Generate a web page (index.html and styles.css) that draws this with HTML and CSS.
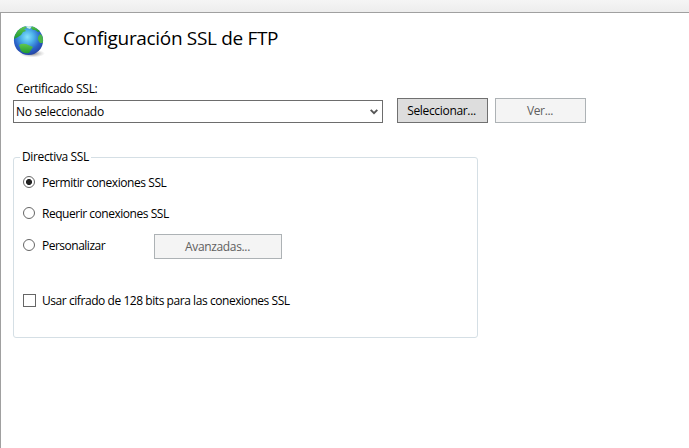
FILE: index.html
```html
<!DOCTYPE html>
<html lang="es">
<head>
<meta charset="utf-8">
<title>Configuración SSL de FTP</title>
<link rel="stylesheet" href="styles.css">
</head>
<body>
<div class="toolbar"></div>
<main class="page">
  <header class="header">
    <svg class="globe" width="34" height="34" viewBox="0 0 34 34">
      <defs>
        <radialGradient id="sea" cx=".46" cy=".38" r=".62">
          <stop offset="0" stop-color="#86e2fa"/><stop offset=".35" stop-color="#4db2ea"/><stop offset=".72" stop-color="#2a63c8"/><stop offset="1" stop-color="#2444a4"/>
        </radialGradient>
        <linearGradient id="land" x1="0" y1="0" x2="0" y2="1"><stop offset="0" stop-color="#62c850"/><stop offset="1" stop-color="#1f9a30"/></linearGradient>
        <radialGradient id="shade"><stop offset="0" stop-color="#666" stop-opacity=".9"/><stop offset="1" stop-color="#aaa" stop-opacity="0"/></radialGradient>
        <clipPath id="ball"><circle cx="15.5" cy="15.5" r="14.5"/></clipPath>
      </defs>
      <ellipse cx="19" cy="28.5" rx="13" ry="4" fill="url(#shade)"/>
      <circle cx="15.5" cy="15.5" r="14.6" fill="url(#sea)"/>
      <g clip-path="url(#ball)">
        <path d="M1 11 6 3 12 1 14 3 11 4 13 6 10 7 8 10 5 12 3 13 1 14Z" fill="url(#land)"/>
        <path d="M19 1 24 2 28 6 25 7 22 5 20 5 18 3Z" fill="url(#land)"/>
        <path d="M13 1 19 1 17 4 14 3Z" fill="#c9efe9"/>
        <path d="M27 9 31 12 30 18 27 18 25 15 25 12Z" fill="#4bb648"/>
        <path d="M6 20Q9 18 13 19L20 22 18 25 16 28Q11 29 8 26Z" fill="url(#land)"/>
      </g>
    </svg>
    <h1><span class="t-title">Configuración SSL de FTP</span></h1>
  </header>
  <div class="label"><span class="t-cert">Certificado SSL:</span></div>
  <div class="cert-row">
    <div class="combo"><span class="t-none">No seleccionado</span>
      <svg width="8" height="7" viewBox="0 0 8 7"><path d="M.7 1.8 4 5.1 7.3 1.8" fill="none" stroke="#555" stroke-width="1.9"/></svg>
    </div>
    <button class="btn select"><span class="t-sel">Seleccionar...</span></button>
    <button class="btn view" disabled><span class="t-view">Ver...</span></button>
  </div>
  <section class="group">
    <div class="legend"><span class="t-legend">Directiva SSL</span></div>
    <div class="option"><i class="radio checked"></i><span class="t-allow">Permitir conexiones SSL</span></div>
    <div class="option"><i class="radio"></i><span class="t-require">Requerir conexiones SSL</span></div>
    <div class="option custom"><i class="radio"></i><span class="t-custom">Personalizar</span><button class="btn advanced" disabled><span class="t-adv">Avanzadas...</span></button></div>
    <div class="option cipher"><i class="check"></i><span class="t-cipher">Usar cifrado de 128 bits para las conexiones SSL</span></div>
  </section>
</main>
</body>
</html>
```
FILE: styles.css
```css
* { box-sizing: border-box; }
body { margin: 0; height: 448px; overflow: hidden; background: #fff; color: #000; font: 12px/16px "Open Sans", "Noto Sans", sans-serif; }
span { white-space: nowrap; }
.toolbar { height: 12px; background: linear-gradient(#f5f5f5, #ededed); }
.page { height: 436px; border-top: 1px solid #a0a0a0; border-left: 1px solid #a0a0a0; padding: 12px 0 0 12px; }
.header { display: flex; height: 56px; }
.globe { width: 34px; height: 34px; }
h1 { margin: 0 0 0 16px; font-size: 19px; line-height: 27px; font-weight: 400; }
.label { height: 19px; padding-left: 3px; }
.cert-row { display: flex; height: 26px; align-items: flex-start; margin-top: -2px; }
.combo { display: flex; align-items: center; justify-content: space-between; width: 370px; height: 23px; margin: 2px 14px 0 0; padding: 0 4px 0 2px; border: 1px solid #6d6d6d; }
.btn { display: flex; align-items: center; justify-content: center; height: 25px; padding: 0; border: 1px solid #707070; border-radius: 0; background: #ddd; color: #000; font: inherit; }
.btn:disabled { background: #f4f4f4; border-color: #adb2b5; color: #606060; }
.select { width: 91px; margin-right: 7px; padding-right: 2px; }
.view { width: 91px; padding-right: 1px; }
.group { width: 465px; height: 181px; margin-top: 33px; border: 1px solid #d5dfe5; border-radius: 3px; padding-left: 9px; }
.legend { width: max-content; height: 16px; margin: -9px 0 10px -3px; padding: 0 2px; background: #fff; }
.option { display: flex; align-items: center; height: 16px; margin-bottom: 15px; }
.radio, .check { flex: none; width: 12px; height: 12px; margin: -2px 7px 0 0; border: 1px solid #666; border-radius: 50%; }
.checked { background: radial-gradient(circle, #222 2.7px, transparent 3.3px); }
.check { width: 13px; height: 13px; margin-right: 6px; margin-top: -1px; border-radius: 0; }
.custom { height: 25px; margin: -3px 0 34px; }
.custom .radio { margin-top: -4px; }
.t-custom { margin-top: -2px; }
.advanced { width: 128px; margin-left: auto; margin-right: 195px; padding-right: 1px; }
.t-title { letter-spacing: -.33px; }
.t-cert { letter-spacing: -.3px; }
.t-none { letter-spacing: -.27px; }
.t-sel { letter-spacing: -.32px; }
.t-view, .t-legend { letter-spacing: -.36px; }
.t-allow { letter-spacing: -.43px; }
.t-require { letter-spacing: -.47px; }
.t-custom { letter-spacing: -.5px; }
.t-adv { letter-spacing: -.35px; }
.t-cipher { letter-spacing: -.44px; }
```
